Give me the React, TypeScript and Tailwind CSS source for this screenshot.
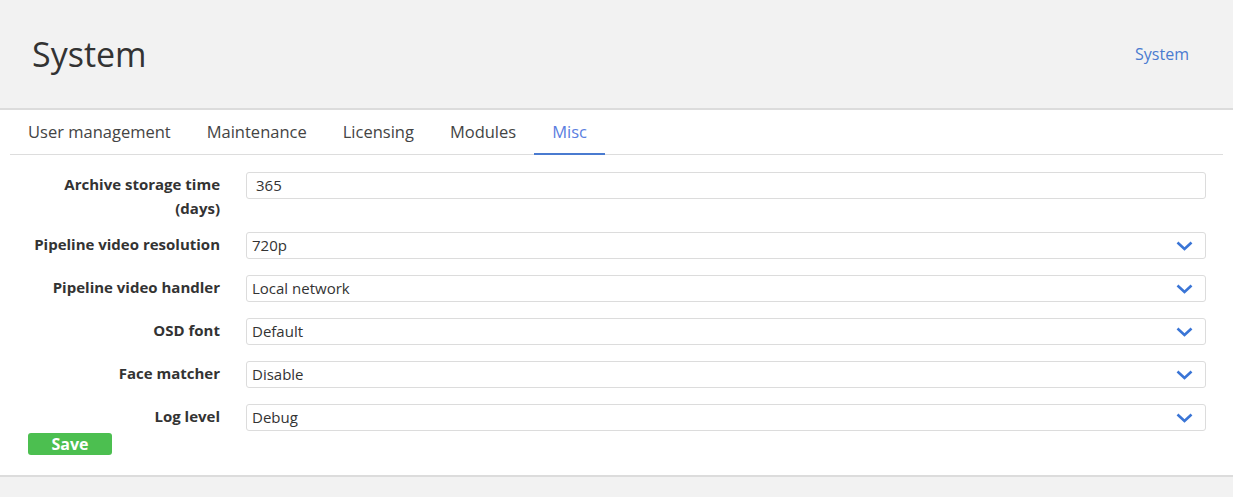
const FONT = { fontFamily: '"Open Sans", "Noto Sans", sans-serif' }

const TABS = ['User management', 'Maintenance', 'Licensing', 'Modules', 'Misc']

const SELECTS = [
  { label: 'Pipeline video resolution', value: '720p' },
  { label: 'Pipeline video handler', value: 'Local network' },
  { label: 'OSD font', value: 'Default' },
  { label: 'Face matcher', value: 'Disable' },
  { label: 'Log level', value: 'Debug' },
]

function Chevron() {
  return (
    <svg width="17" height="10" viewBox="0 0 17 10" className="shrink-0">
      <path d="M1.5 1.5 L8.5 8 L15.5 1.5" fill="none" stroke="#3a75d6" strokeWidth="2.6" />
    </svg>
  )
}

function Row({ label, children, gap = 'mb-[16px]' }: { label: React.ReactNode; children: React.ReactNode; gap?: string }) {
  return (
    <div className={`flex items-start ${gap}`}>
      <div className="w-[210px] shrink-0 text-right text-[15px] font-bold leading-6 text-[#333]">
        {label}
      </div>
      <div className="ml-[26px] w-[960px]">{children}</div>
    </div>
  )
}

function SelectBox({ value }: { value: string }) {
  return (
    <div className="flex h-[27px] items-center justify-between rounded-[3px] border border-[#dcdcdc] pl-[5px] pr-[12px] text-[15px] text-[#333]">
      <span>{value}</span>
      <Chevron />
    </div>
  )
}

export default function App() {
  return (
    <div className="h-[497px] w-[1233px] overflow-hidden bg-[#f2f2f2]" style={FONT}>
      <header className="flex h-[110px] items-center justify-between border-b-2 border-[#dcdcdc] pl-[32px] pr-[44px]">
        <h1 className="text-[34px] font-normal text-[#333]">System</h1>
        <a className="text-[16px] text-[#4a7bd0]">System</a>
      </header>
      <div className="h-[367px] border-b-2 border-[#dcdcdc] bg-white px-[10px]">
        <nav className="flex h-[45px] border-b border-[#ddd]">
          {TABS.map((t) => (
            <div
              key={t}
              className={`flex items-center px-[18px] text-[16.5px] ${
                t === 'Misc' ? '-mb-px border-b-2 border-[#4a7bd0] pt-[1px] text-[#5b7ee0]' : 'text-[#444]'
              }`}
            >
              {t}
            </div>
          ))}
        </nav>
        <div className="pt-[17px]">
          <Row
            gap="mb-[12px]"
            label={
              <>
                Archive storage time
                <br />
                (days)
              </>
            }
          >
            <div className="flex h-[27px] items-center rounded-[3px] border border-[#dcdcdc] pl-[9px] text-[15px] text-[#333]">
              365
            </div>
          </Row>
          {SELECTS.map((s, i) => (
            <Row key={s.label} label={s.label} gap={i === SELECTS.length - 1 ? 'mb-[1px]' : 'mb-[16px]'}>
              <SelectBox value={s.value} />
            </Row>
          ))}
          <button className="ml-[18px] h-[22px] w-[84px] rounded-[3px] bg-[#4cbf50] text-[16px] font-bold leading-none text-white">
            Save
          </button>
        </div>
      </div>
    </div>
  )
}
